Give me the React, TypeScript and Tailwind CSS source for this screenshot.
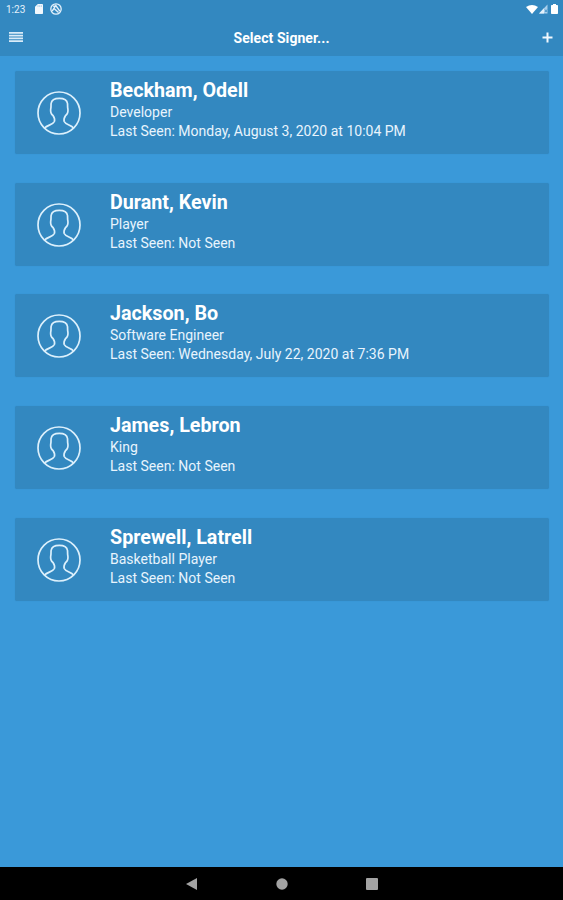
interface Signer {
  name: string;
  role: string;
  lastSeen: string;
}

const signers: Signer[] = [
  { name: 'Beckham, Odell', role: 'Developer', lastSeen: 'Monday, August 3, 2020 at 10:04 PM' },
  { name: 'Durant, Kevin', role: 'Player', lastSeen: 'Not Seen' },
  { name: 'Jackson, Bo', role: 'Software Engineer', lastSeen: 'Wednesday, July 22, 2020 at 7:36 PM' },
  { name: 'James, Lebron', role: 'King', lastSeen: 'Not Seen' },
  { name: 'Sprewell, Latrell', role: 'Basketball Player', lastSeen: 'Not Seen' },
];

function StatusBar() {
  return (
    <div className="flex h-[18px] items-center justify-between pl-[6px] pr-[5px]">
      <div className="flex items-center">
        <span className="w-[29px] pt-px text-[10px] leading-none text-[#e4f1fb]">1:23</span>
        <svg className="h-[10px] w-[8px]" viewBox="0 0 8 10" fill="#f2f8fd">
          <path d="M2.8 0H7.2Q8 0 8 .8V9.2Q8 10 7.2 10H.8Q0 10 0 9.2V2.8Z" />
          <path d="M3 1.2V3M4.7 1.2V3M6.4 1.2V3" stroke="#8abbe0" strokeWidth=".6" />
        </svg>
        <svg className="ml-[7px] h-[12px] w-[12px]" viewBox="0 0 12 12" fill="none" stroke="#e4f1fb">
          <circle cx="6" cy="6" r="5.2" strokeWidth="1.3" />
          <path d="M2.2 8.2 5.8 2.5 9.8 8.2M4 5.5 8.5 9.5M6 3 3.2 3.2" strokeWidth="1.4" />
        </svg>
      </div>
      <div className="flex items-center">
        <svg className="h-[9px] w-[12px]" viewBox="0 0 12 9" fill="#fff">
          <path d="M0 2.1Q6-2 12 2.1L6 9Z" />
        </svg>
        <svg className="ml-[1px] h-[10px] w-[9px]" viewBox="0 0 9 10">
          <path d="M0 9.5 8.5.5V9.5Z" fill="#a9cfec" />
          <path d="M0 9.5 5 4.2V9.5Z" fill="#e4f1fb" />
          <path d="M6 5.5 8 8M8 5.5 6 8" stroke="#3388c0" strokeWidth=".8" />
        </svg>
        <svg className="ml-[3px] h-[10px] w-[7px]" viewBox="0 0 7 10" fill="#fff">
          <path d="M2 0H5V1H6.2Q7 1 7 1.8V9.2Q7 10 6.2 10H.8Q0 10 0 9.2V1.8Q0 1 .8 1H2Z" />
        </svg>
      </div>
    </div>
  );
}

function Toolbar() {
  return (
    <div className="flex h-[38px] items-center justify-between pl-[9px] pr-[10px]">
      <svg className="h-[10px] w-[14px]" viewBox="0 0 14 10" fill="#d9ebf8">
        <path d="M0 0H14V1.8H0ZM0 2.75H14V4.55H0ZM0 5.45H14V7.25H0ZM0 8.2H14V10H0Z" />
      </svg>
      <h1 className="pr-[2px] pt-[2px] text-[14px] font-bold leading-none tracking-[0.07px] text-white">Select Signer...</h1>
      <svg className="h-[11px] w-[11px]" viewBox="0 0 11 11" stroke="#f2f8fd" strokeWidth="2">
        <path d="M5.5 .5V10.5M.5 5.5H10.5" />
      </svg>
    </div>
  );
}

function Avatar() {
  return (
    <svg className="h-[44px] w-[44px]" viewBox="0 0 44 44" fill="none" stroke="#dcf0fc" strokeWidth="1.7" strokeLinejoin="round">
      <circle cx="22" cy="22" r="21" />
      <path d="M7.5 37C10.5 34 16 33.8 17.4 30.5C18.1 28.3 17.5 26.8 16 24.5C14.2 23.3 13.4 20.5 13.7 18C14.2 16.5 13.9 14.5 14.1 12.5C14.6 9 18 7.3 22.3 7.3C26.6 7.3 30 9 30.5 12.5C30.7 14.5 30.4 16.5 30.9 18C31.2 20.5 30.4 23.3 28.6 24.5C27.1 26.8 26.5 28.3 27.2 30.5C28.6 33.8 34 34 36.5 37" />
    </svg>
  );
}

function SignerCard({ signer }: { signer: Signer }) {
  return (
    <div className="flex h-[83px] rounded-[2px] bg-[#3388c0] pl-[22.5px] shadow-[0_0_1px_rgba(30,100,160,0.3)]">
      <div className="w-[73px] pt-[20px]">
        <Avatar />
      </div>
      <div className="pt-[7px] text-[14px] leading-[19px] tracking-[0.01px] text-[#e8f4fd]">
        <h2 className="text-[19.7px] font-bold leading-[25px] text-white">{signer.name}</h2>
        <p>{signer.role}</p>
        <p>Last Seen: {signer.lastSeen}</p>
      </div>
    </div>
  );
}

function NavigationBar() {
  return (
    <div className="flex h-[33px] items-center justify-center gap-[78px] bg-black">
      <svg className="h-[12px] w-[12px]" viewBox="0 0 12 12" fill="#a3a3a3">
        <path d="M0 6 11 0V12Z" />
      </svg>
      <svg className="h-[12px] w-[12px]" viewBox="0 0 12 12" fill="#a3a3a3">
        <circle cx="6" cy="6" r="5.7" />
      </svg>
      <svg className="h-[12px] w-[12px]" viewBox="0 0 12 12" fill="#a3a3a3">
        <rect width="12" height="12" rx="1" />
      </svg>
    </div>
  );
}

export default function App() {
  return (
    <div className="flex h-[900px] w-[563px] flex-col overflow-hidden bg-[#3a99d9] font-['Roboto',sans-serif]">
      <header className="bg-[#3388c0]">
        <StatusBar />
        <Toolbar />
      </header>
      <main className="flex flex-1 flex-col gap-[28.8px] px-[14.5px] pt-[14.8px]">
        {signers.map((signer) => (
          <SignerCard key={signer.name} signer={signer} />
        ))}
      </main>
      <NavigationBar />
    </div>
  );
}
